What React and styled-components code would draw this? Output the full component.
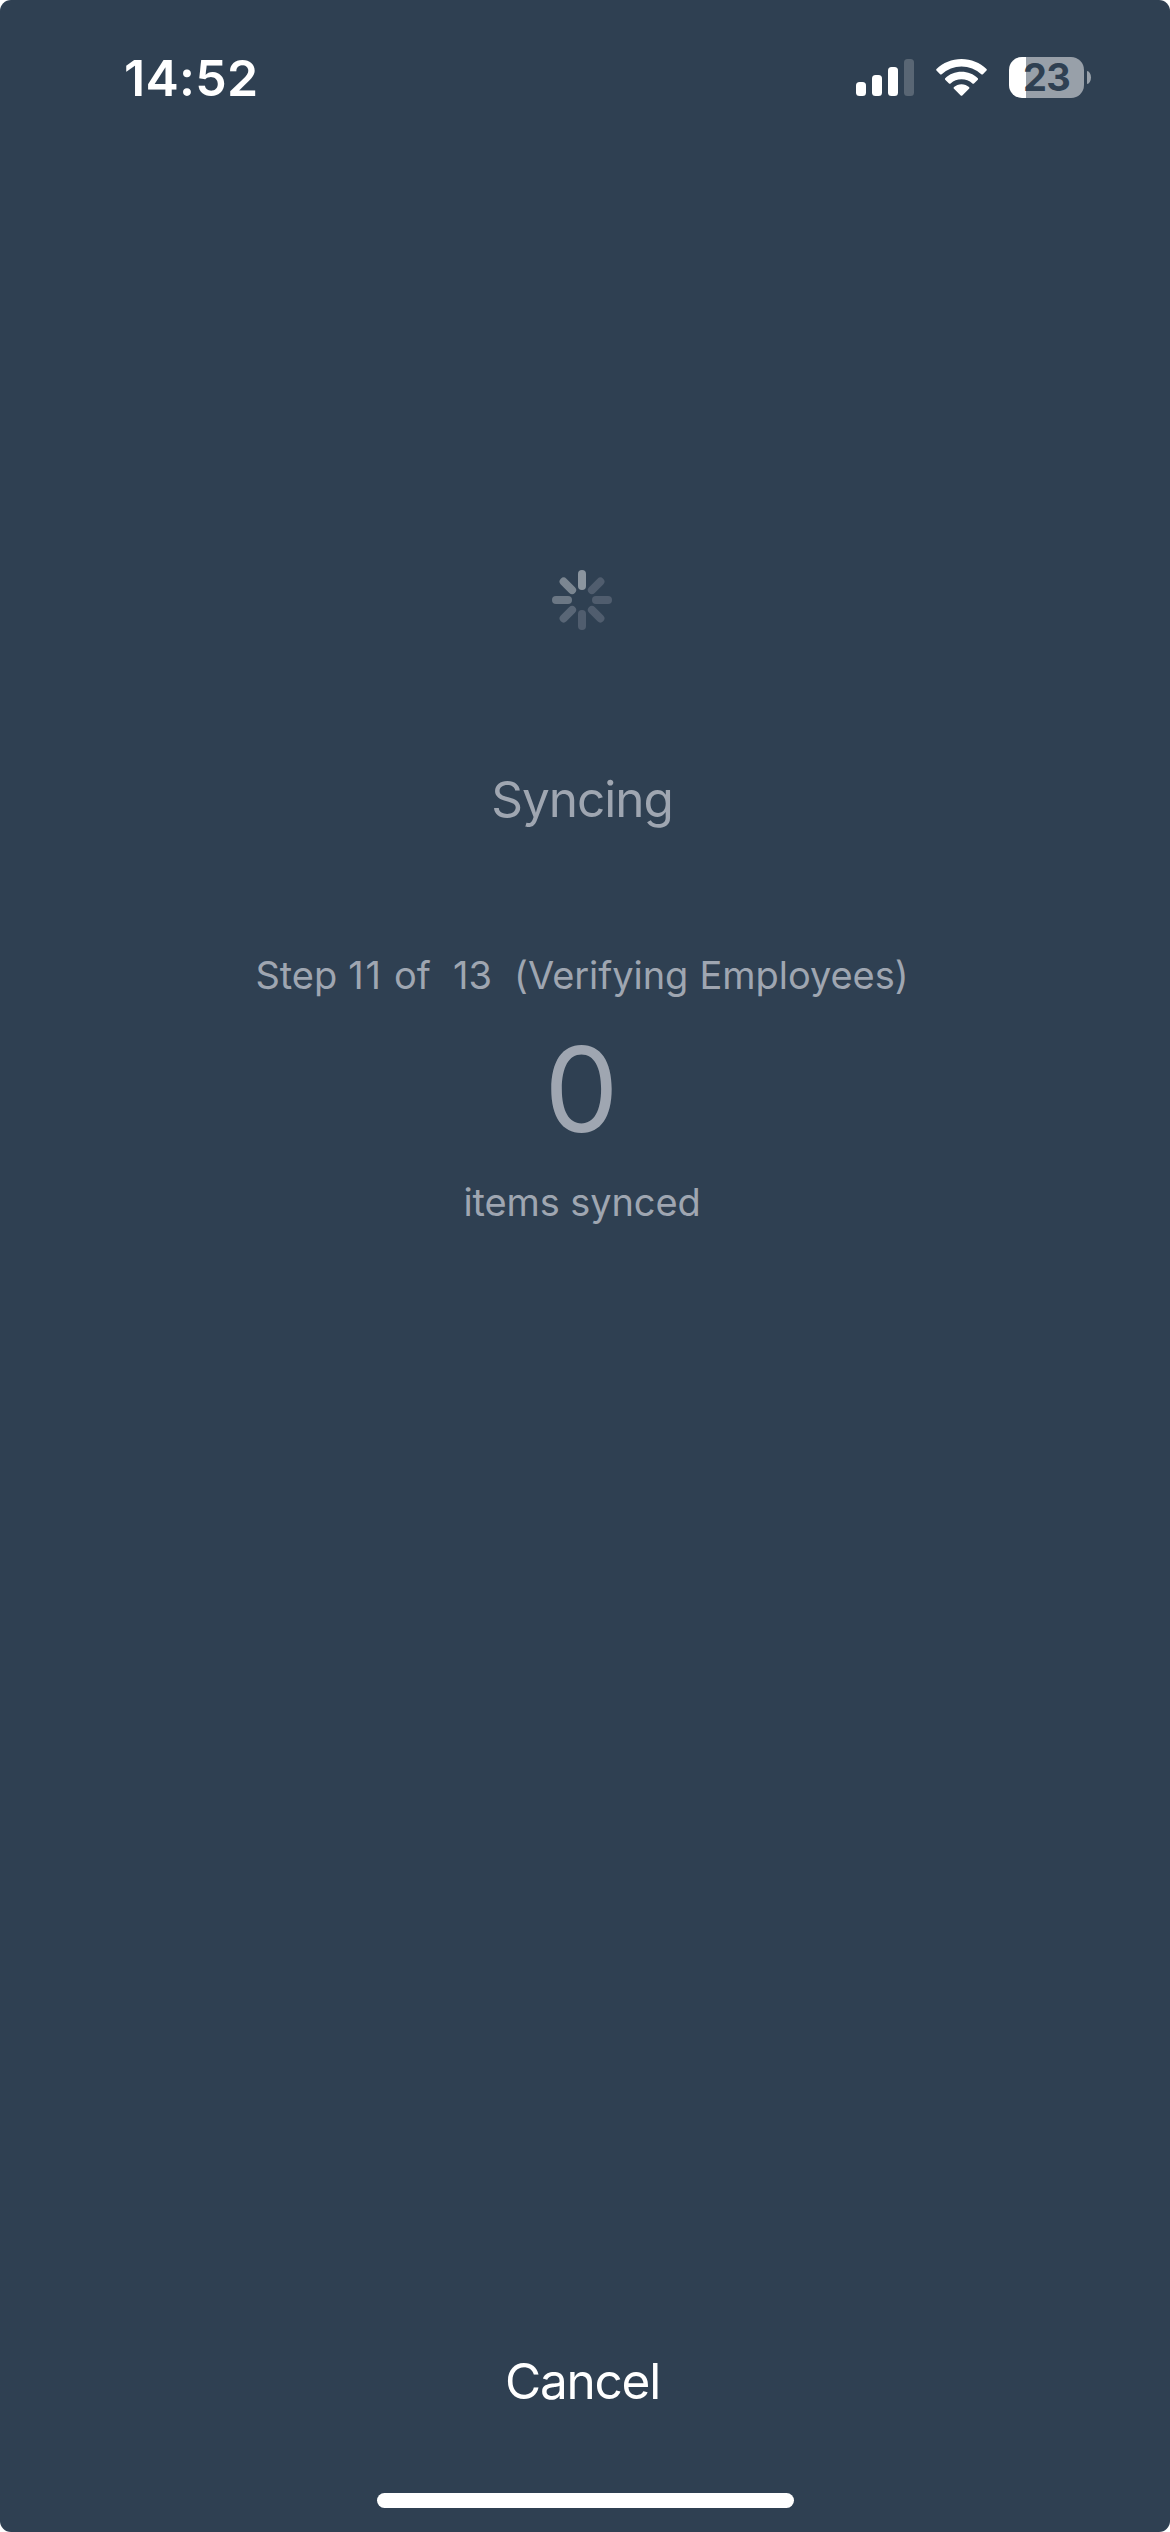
import React from 'react'
import styled, { createGlobalStyle } from 'styled-components'

const GlobalStyle = createGlobalStyle`
    body {
        margin: 0;
        background: #ffffff;
    }
`
const Screen = styled.div`
    display: flex;
    flex-direction: column;
    box-sizing: border-box;
    width: 1170px;
    height: 2532px;
    border-radius: 11px;
    background: #2f4052;
    font-family: Inter, "Liberation Sans", sans-serif;
    overflow: hidden;
`
const StatusBar = styled.div`
    display: flex;
    align-items: center;
    justify-content: space-between;
    box-sizing: border-box;
    height: 155px;
    padding: 0 79px 0 124px;
`
const Time = styled.div`
    font-size: 50px;
    line-height: 60px;
    font-weight: 600;
    letter-spacing: 0.3px;
    color: #ffffff;
`
const StatusIcons = styled.div`
    display: flex;
    align-items: center;
`
const Signal = styled.div`
    display: flex;
    align-items: flex-end;
    gap: 6px;
    height: 37px;
    margin-right: 22px;
`
const Bar = styled.div`
    width: 10px;
    height: ${props => props.$height}px;
    border-radius: 3.5px;
    background: ${props => props.$off ? '#596674' : '#ffffff'};
`
const WifiIcon = styled.svg`
    display: block;
    width: 51px;
    height: 37px;
    margin-right: 22px;
`
const Battery = styled.div`
    display: flex;
    align-items: center;
    justify-content: center;
    width: 75px;
    height: 41px;
    border-radius: 13px;
    background: linear-gradient(to right, #ffffff 17px, #98a0a9 17px);
    font-size: 38px;
    line-height: 41px;
    font-weight: 700;
    letter-spacing: -0.8px;
    color: #2f4052;
`
const BatteryTip = styled.div`
    width: 4px;
    height: 13px;
    margin-left: 3px;
    border-radius: 0 4px 4px 0 / 0 6.5px 6.5px 0;
    background: #98a0a9;
`
const Content = styled.div`
    display: flex;
    flex-direction: column;
    align-items: center;
    flex: 1;
    padding: 415px 6px 0 0;
`
const Spinner = styled.svg`
    display: block;
    width: 60px;
    height: 60px;
    margin-bottom: 139px;
`
const Title = styled.div`
    margin-bottom: 122px;
    font-size: 49.5px;
    line-height: 60px;
    letter-spacing: -1px;
    color: #9fa6b1;
`
const Detail = styled.div`
    font-size: 38px;
    line-height: 48px;
    letter-spacing: ${props => props.$spacing || 0}px;
    word-spacing: ${props => props.$wordSpacing || 0}px;
    color: #9fa6b1;
    white-space: pre;
`
const StepNumber = styled.span`
    letter-spacing: 1.8px;
`
const Count = styled.div`
    margin: 30px 1px 29px 0;
    font-size: 118px;
    line-height: 120px;
    color: #9fa6b1;
`
const Footer = styled.div`
    display: flex;
    flex-direction: column;
    align-items: center;
    padding-bottom: 24px;
`
const CancelButton = styled.button`
    margin: 0 5px 82px 0;
    padding: 0;
    border: none;
    background: none;
    font-family: inherit;
    font-size: 49.5px;
    line-height: 60px;
    letter-spacing: -1.2px;
    color: #ffffff;
`
const HomeIndicator = styled.div`
    width: 417px;
    height: 15px;
    margin-left: 1px;
    border-radius: 8px;
    background: #ffffff;
`

const petals = ['#8b959f', '#505d6e', '#505d6e', '#505d6e', '#505d6e', '#596676', '#6b7784', '#7b8691']

const App = () => {
    return (
        <>
            <GlobalStyle />
            <Screen>
                <StatusBar>
                    <Time>14:52</Time>
                    <StatusIcons>
                        <Signal>
                            <Bar $height={14} />
                            <Bar $height={21} />
                            <Bar $height={29} />
                            <Bar $height={37} $off />
                        </Signal>
                        <WifiIcon viewBox="0 0 51 37" fill="#ffffff">
                            <path d="M25.5 0C35.2 0 44 3.8 50.5 10Q51.2 10.8 50.5 11.6L46.9 15.2Q46.1 15.9 45.3 15.2A29 29 0 0 0 5.7 15.2Q4.9 15.9 4.1 15.2L.5 11.6Q-.2 10.8.5 10C7 3.8 15.8 0 25.5 0Z" />
                            <path d="M25.5 12.8C31.8 12.8 37.5 15.2 41.8 19.2Q42.5 20 41.8 20.7L38 24.5Q37.2 25.2 36.4 24.5A16.4 16.4 0 0 0 14.6 24.5Q13.8 25.2 13 24.5L9.2 20.7Q8.5 20 9.2 19.2C13.5 15.2 19.2 12.8 25.5 12.8Z" />
                            <path d="M25.5 25.2C28.4 25.2 31 26.3 33 28.1Q33.8 28.9 33 29.7L26.3 36.4Q25.5 37.2 24.7 36.4L18 29.7Q17.2 28.9 18 28.1C20 26.3 22.6 25.2 25.5 25.2Z" />
                        </WifiIcon>
                        <Battery>23</Battery>
                        <BatteryTip />
                    </StatusIcons>
                </StatusBar>
                <Content>
                    <Spinner viewBox="0 0 60 60">
                        {petals.map((color, i) => (
                            <rect key={i} x="26" y="0" width="8" height="20" rx="4" fill={color} transform={`rotate(${i * 45} 30 30)`} />
                        ))}
                    </Spinner>
                    <Title>Syncing</Title>
                    <Detail $spacing={-0.05} $wordSpacing={0.5}>
                        Step <StepNumber>11</StepNumber>{' of  13  (Verifying Employees)'}
                    </Detail>
                    <Count>0</Count>
                    <Detail $spacing={-0.1}>items synced</Detail>
                </Content>
                <Footer>
                    <CancelButton>Cancel</CancelButton>
                    <HomeIndicator />
                </Footer>
            </Screen>
        </>
    )
}

export default App
